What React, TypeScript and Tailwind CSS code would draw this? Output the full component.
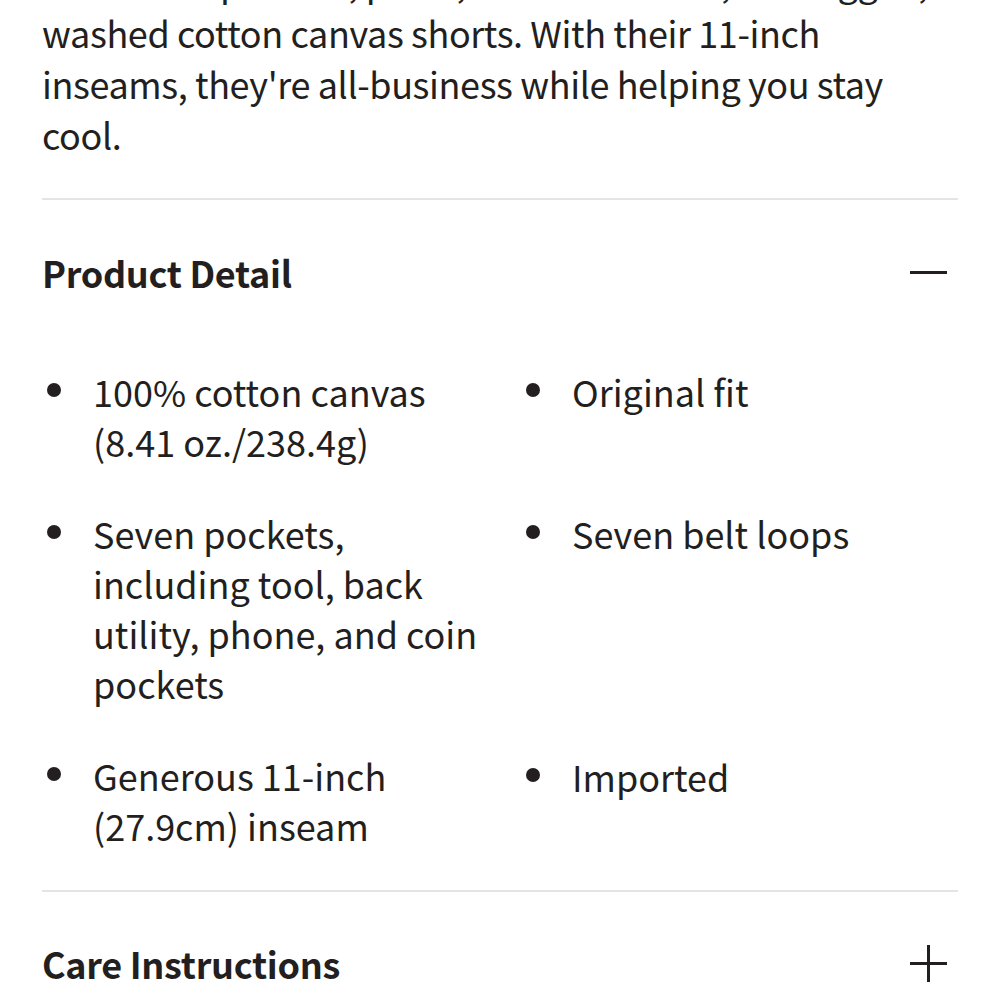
const font = { fontFamily: '"Noto Sans CJK JP", "Noto Sans", sans-serif' };

const col1 = [
  "100% cotton canvas (8.41 oz./238.4g)",
  "Seven pockets, including tool, back utility, phone, and coin pockets",
  "Generous 11-inch (27.9cm) inseam",
];
const col2 = ["Original fit", "Seven belt loops", "Imported"];

function Bullet({ text }: { text: string }) {
  return (
    <li className="flex">
      <span className="w-[51px] shrink-0 flex items-start pt-[17px] pl-[5px]">
        <span className="block w-[14px] h-[14px] rounded-full bg-[#231f20]" />
      </span>
      <span className="max-w-[400px]">{text}</span>
    </li>
  );
}

function Toggle({ open }: { open: boolean }) {
  return (
    <span className="relative block w-[37px] h-[37px] mr-[11px]">
      <span className="absolute left-0 right-0 top-[17px] h-[3px] bg-[#231f20]" />
      {!open && <span className="absolute top-0 bottom-0 left-[17px] w-[3px] bg-[#231f20]" />}
    </span>
  );
}

export default function App() {
  return (
    <div className="w-[1000px] h-[1000px] overflow-hidden bg-white text-[#231f20]" style={font}>
      <div className="px-[42px]">
        <p className="mt-[-44px] text-[36px] leading-[51px] tracking-[-0.4px] whitespace-nowrap">
          Made with pockets, pliers, tools and more, our rugged,
          <br />
          washed cotton canvas shorts. With their 11-inch
          <br />
          inseams, they're all-business while helping you stay
          <br />
          cool.
        </p>

        <div className="mt-[38px] h-[2px] bg-[#e4e4e4]" />

        <div className="flex items-center justify-between mt-[50px] h-[44px]">
          <h2 className="text-[36px] font-bold leading-[44px] tracking-[-0.3px]">Product Detail</h2>
          <Toggle open />
        </div>

        <div className="grid grid-cols-[451px_1fr] gap-x-[28px] mt-[72px] text-[36px] leading-[50px]">
          <ul className="flex flex-col gap-[42px]">
            {col1.map((t) => (
              <Bullet key={t} text={t} />
            ))}
          </ul>
          <ul className="flex flex-col">
            <Bullet text={col2[0]} />
            <div className="h-[92px]" />
            <Bullet text={col2[1]} />
            <div className="h-[193px]" />
            <Bullet text={col2[2]} />
          </ul>
        </div>

        <div className="mt-[40px] h-[2px] bg-[#e4e4e4]" />

        <div className="flex items-center justify-between mt-[49px] h-[44px]">
          <h2 className="text-[36px] font-bold leading-[44px] tracking-[-0.3px]">Care Instructions</h2>
          <Toggle open={false} />
        </div>
      </div>
    </div>
  );
}
